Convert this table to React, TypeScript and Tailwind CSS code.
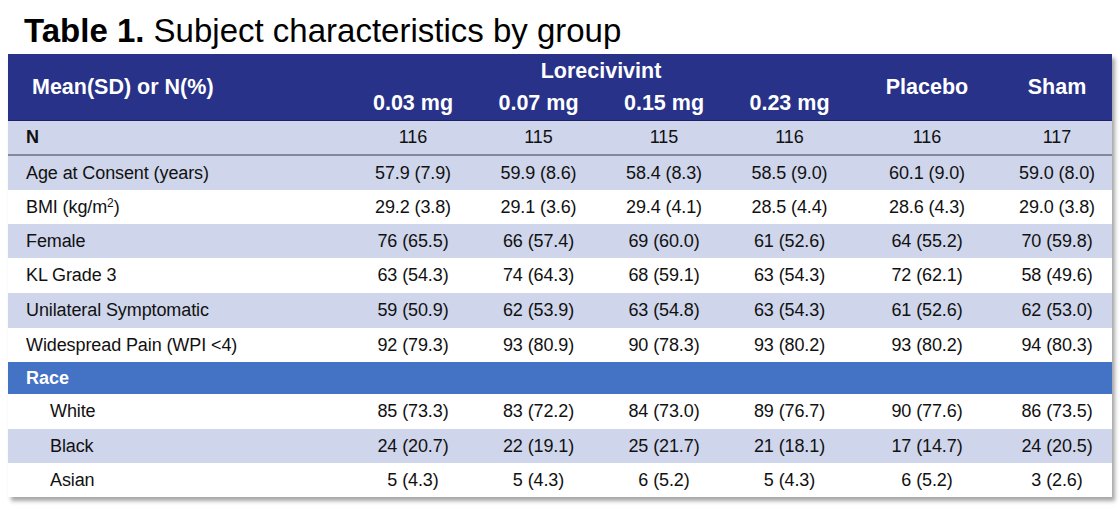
import React from "react";

const cols = "grid grid-cols-[342px_126px_125px_126px_125px_150px_110px]";

type Row = { label: React.ReactNode; vals: string[]; bg: string; indent?: boolean; h: string };

const rows: Row[] = [
  { label: "Age at Consent (years)", vals: ["57.9 (7.9)", "59.9 (8.6)", "58.4 (8.3)", "58.5 (9.0)", "60.1 (9.0)", "59.0 (8.0)"], bg: "bg-[#cfd5ea]", h: "h-[34px]" },
  { label: <>BMI (kg/m<sup className="text-[12px]">2</sup>)</>, vals: ["29.2 (3.8)", "29.1 (3.6)", "29.4 (4.1)", "28.5 (4.4)", "28.6 (4.3)", "29.0 (3.8)"], bg: "bg-white", h: "h-[34px]" },
  { label: "Female", vals: ["76 (65.5)", "66 (57.4)", "69 (60.0)", "61 (52.6)", "64 (55.2)", "70 (59.8)"], bg: "bg-[#cfd5ea]", h: "h-[34px]" },
  { label: "KL Grade 3", vals: ["63 (54.3)", "74 (64.3)", "68 (59.1)", "63 (54.3)", "72 (62.1)", "58 (49.6)"], bg: "bg-white", h: "h-[35px]" },
  { label: "Unilateral Symptomatic", vals: ["59 (50.9)", "62 (53.9)", "63 (54.8)", "63 (54.3)", "61 (52.6)", "62 (53.0)"], bg: "bg-[#cfd5ea]", h: "h-[35px]" },
  { label: "Widespread Pain (WPI <4)", vals: ["92 (79.3)", "93 (80.9)", "90 (78.3)", "93 (80.2)", "93 (80.2)", "94 (80.3)"], bg: "bg-white", h: "h-[34px]" },
];

const race: Row[] = [
  { label: "White", vals: ["85 (73.3)", "83 (72.2)", "84 (73.0)", "89 (76.7)", "90 (77.6)", "86 (73.5)"], bg: "bg-white", indent: true, h: "h-[35px]" },
  { label: "Black", vals: ["24 (20.7)", "22 (19.1)", "25 (21.7)", "21 (18.1)", "17 (14.7)", "24 (20.5)"], bg: "bg-[#cfd5ea]", indent: true, h: "h-[34px]" },
  { label: "Asian", vals: ["5 (4.3)", "5 (4.3)", "6 (5.2)", "5 (4.3)", "6 (5.2)", "3 (2.6)"], bg: "bg-white", indent: true, h: "h-[34px]" },
];

function DataRow({ r }: { r: Row }) {
  return (
    <div className={`${cols} ${r.bg} ${r.h} items-center text-[18px] tracking-[-0.1px] text-[#111]`}>
      <div className={r.indent ? "pl-[42px]" : "pl-[18px]"}>{r.label}</div>
      {r.vals.map((v, i) => (
        <div key={i} className="text-center">{v}</div>
      ))}
    </div>
  );
}

export default function App() {
  return (
    <div className="w-[1120px] h-[506px] bg-white overflow-hidden" style={{ fontFamily: '"Liberation Sans", Arial, sans-serif' }}>
      <div className="h-[54px] pt-[13px] pl-[24px] text-[33px] leading-[36px] text-black">
        <span className="font-bold">Table 1.</span> Subject characteristics by group
      </div>
      <div className="ml-[8px] w-[1104px] shadow-[3px_4px_4px_rgba(0,0,0,0.35)]">
        <div className={`${cols} grid-rows-[33px_33px] bg-[#283289] text-white font-bold text-[21.5px] border-b border-[#1c2360]`}>
          <div className="row-span-2 flex items-center pl-[24px]">Mean(SD) or N(%)</div>
          <div className="col-span-4 flex items-center justify-center pt-[1px]">Lorecivivint</div>
          <div className="row-span-2 col-start-6 row-start-1 flex items-center justify-center">Placebo</div>
          <div className="row-span-2 col-start-7 row-start-1 flex items-center justify-center">Sham</div>
          <div className="col-start-2 row-start-2 flex items-center justify-center pb-[1px]">0.03 mg</div>
          <div className="col-start-3 row-start-2 flex items-center justify-center pb-[1px]">0.07 mg</div>
          <div className="col-start-4 row-start-2 flex items-center justify-center pb-[1px]">0.15 mg</div>
          <div className="col-start-5 row-start-2 flex items-center justify-center pb-[1px]">0.23 mg</div>
        </div>
        <div className={`${cols} bg-[#cfd5ea] h-[35px] items-center text-[18px] tracking-[-0.1px] text-[#111] border-b-2 border-[#85879a]`}>
          <div className="pl-[18px] font-bold">N</div>
          {["116", "115", "115", "116", "116", "117"].map((v, i) => (
            <div key={i} className="text-center">{v}</div>
          ))}
        </div>
        {rows.map((r, i) => (
          <DataRow key={i} r={r} />
        ))}
        <div className="h-[32px] bg-[#4472c4] flex items-center pl-[18px] text-white font-bold text-[18px]">Race</div>
        {race.map((r, i) => (
          <DataRow key={i} r={r} />
        ))}
      </div>
    </div>
  );
}
